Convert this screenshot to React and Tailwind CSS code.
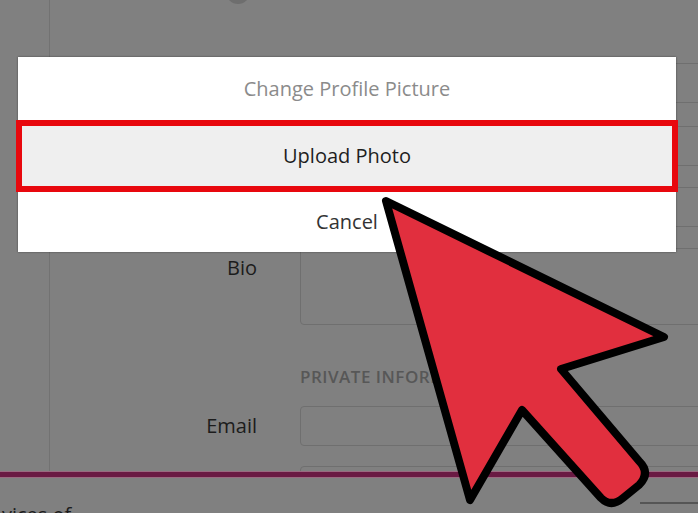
import React from 'react'

const font = "font-['Open_Sans','Liberation_Sans',sans-serif]"

function Field({ label, className = 'h-[40px]', align = 'items-center', labelPad = '' }) {
  return (
    <div className={`flex ${align}`}>
      <div className={`w-[207px] shrink-0 text-right text-[20px] leading-[28px] text-[#1c1c1c] ${labelPad}`}>{label}</div>
      <div className={`ml-[43px] w-[420px] shrink-0 rounded-[4px] border border-[#6f6f6f] ${className}`} />
    </div>
  )
}

function Arrow() {
  return (
    <svg className="pointer-events-none absolute inset-0" width="698" height="513" viewBox="0 0 698 513">
      <path
        d="M386 201 L664 337 L561 369 L639 461 Q651 473 639 485 L623 498 Q611 508 601 498 L522 410 L470 500 Z"
        fill="#e12f3e"
        stroke="#000"
        strokeWidth="8"
        strokeLinejoin="round"
      />
    </svg>
  )
}

export default function App() {
  return (
    <div className={`relative h-[513px] w-[698px] overflow-hidden bg-[#808080] ${font}`}>
      {/* page behind the dialog */}
      <div className="flex h-[471px] overflow-hidden">
        <div className="w-[50px] shrink-0 border-r border-[#727272]" />
        <div className="relative flex-1">
          <div className="absolute left-[176px] top-[-20px] h-[24px] w-[24px] rounded-full bg-[#6e6e6e]" />
          <div className="flex flex-col pt-[63px]">
            <Field label="" />
            <div className="mt-[23px]"><Field label="" /></div>
            <div className="mt-[21px]"><Field label="" /></div>
            <div className="mt-[21px]">
              <Field label="Bio" className="h-[77px]" align="items-start" labelPad="pt-[6px]" />
            </div>
            <div className="ml-[250px] mt-[40px] text-[17px] font-semibold leading-[24px] tracking-[0.5px] text-[#575757]">
              PRIVATE INFORMATION
            </div>
            <div className="mt-[17px]"><Field label="Email" /></div>
            <div className="mt-[20px]"><Field label="" /></div>
          </div>
        </div>
      </div>
      <div className="h-[7px] border-y border-[#9a6a80] bg-[#6a1a43]" />
      <div className="relative h-[35px]">
        <div className="absolute right-0 top-[24px] h-[2px] w-[58px] bg-[#555]" />
        <div className="pl-[2px] pt-[27px] text-[20px] leading-[20px] text-[#1c1c1c]">vices of</div>
      </div>

      {/* dialog */}
      <div className="absolute left-[18px] top-[57px] flex w-[658px] flex-col bg-white shadow-[0_0_2px_rgba(0,0,0,0.45)]">
        <div className="flex h-[63px] items-center justify-center text-[20px] text-[#8b8b8b]">Change Profile Picture</div>
        <div className="-mx-[2px] flex h-[72px] items-center justify-center border-[6px] border-[#e8080e] bg-[#efefef] text-[20px] font-medium text-[#1e1e1e]">
          Upload Photo
        </div>
        <div className="flex h-[60px] items-center justify-center text-[20px] text-[#333]">Cancel</div>
      </div>

      <Arrow />
    </div>
  )
}
